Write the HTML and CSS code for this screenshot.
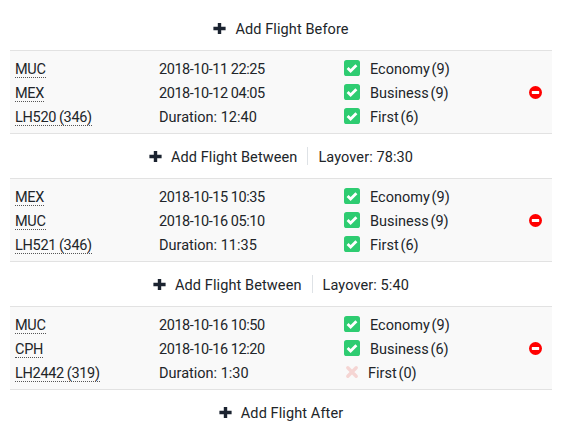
FILE: index.html
```html
<!DOCTYPE html>
<html lang="en">
<head>
<meta charset="utf-8">
<title>Flights</title>
<link rel="stylesheet" href="styles.css">
</head>
<body>
<svg class="defs" width="0" height="0" aria-hidden="true">
  <symbol id="plus" viewBox="0 0 13 13"><path d="M4.800 1h3.400v3.800H12.600v3.400H8.200V12H4.800V8.200H.4V4.800H4.800z"/></symbol>
  <symbol id="check" viewBox="0 0 16 16"><rect width="16" height="16" rx="2.600" fill="#2ecc71"/><path d="M3.600 8l3 3 5.800-5.800" fill="none" stroke="#fff" stroke-width="2.800"/></symbol>
  <symbol id="cross" viewBox="0 0 16 16"><path d="M3.800 3.800l8.400 8.400M12.200 3.800l-8.400 8.400" fill="none" stroke="#f5d5d3" stroke-width="3.400" stroke-linecap="round"/></symbol>
  <symbol id="minus" viewBox="0 0 14 14"><circle cx="7" cy="7" r="7" fill="#f00"/><rect x="3" y="5.500" width="8" height="3" rx=".6" fill="#fff"/></symbol>
</svg>
<main class="list">
  <div class="add first"><svg class="plus"><use href="#plus"/></svg><span class="label">Add Flight Before</span></div>

  <section class="flight">
    <div class="col-code"><span class="code">MUC</span><span class="code">MEX</span><span class="code">LH520 (346)</span></div>
    <div class="col-time"><span class="when">2018-10-11 22:25</span><span class="when">2018-10-12 04:05</span><span class="dur">Duration: 12:40</span></div>
    <div class="col-class">
      <span class="fare"><svg class="ic"><use href="#check"/></svg>Economy (9)</span>
      <span class="fare"><svg class="ic"><use href="#check"/></svg>Business (9)</span>
      <span class="fare"><svg class="ic"><use href="#check"/></svg>First (6)</span>
    </div>
    <svg class="remove"><use href="#minus"/></svg>
  </section>

  <div class="add"><svg class="plus"><use href="#plus"/></svg><span class="label">Add Flight Between</span><span class="label layover">Layover: 78:30</span></div>

  <section class="flight">
    <div class="col-code"><span class="code">MEX</span><span class="code">MUC</span><span class="code">LH521 (346)</span></div>
    <div class="col-time"><span class="when">2018-10-15 10:35</span><span class="when">2018-10-16 05:10</span><span class="dur">Duration: 11:35</span></div>
    <div class="col-class">
      <span class="fare"><svg class="ic"><use href="#check"/></svg>Economy (9)</span>
      <span class="fare"><svg class="ic"><use href="#check"/></svg>Business (9)</span>
      <span class="fare"><svg class="ic"><use href="#check"/></svg>First (6)</span>
    </div>
    <svg class="remove"><use href="#minus"/></svg>
  </section>

  <div class="add"><svg class="plus"><use href="#plus"/></svg><span class="label">Add Flight Between</span><span class="label layover">Layover: 5:40</span></div>

  <section class="flight">
    <div class="col-code"><span class="code">MUC</span><span class="code">CPH</span><span class="code">LH2442 (319)</span></div>
    <div class="col-time"><span class="when">2018-10-16 10:50</span><span class="when">2018-10-16 12:20</span><span class="dur">Duration: 1:30</span></div>
    <div class="col-class">
      <span class="fare"><svg class="ic"><use href="#check"/></svg>Economy (9)</span>
      <span class="fare"><svg class="ic"><use href="#check"/></svg>Business (6)</span>
      <span class="fare none"><svg class="ic"><use href="#cross"/></svg>First (0)</span>
    </div>
    <svg class="remove"><use href="#minus"/></svg>
  </section>

  <div class="add"><svg class="plus"><use href="#plus"/></svg><span class="label">Add Flight After</span></div>
</main>
</body>
</html>
```
FILE: styles.css
```css
html, body { margin: 0; padding: 0; background: #fff; }
body {
  font-family: Roboto, "Liberation Sans", sans-serif;
  font-size: 14.5px;
  line-height: 24px;
  color: #212529;
}
.defs { position: absolute; }
.list { width: 542px; margin-left: 10px; }
.add {
  height: 44px;
  display: flex;
  align-items: center;
  justify-content: center;
}
.add.first { height: 38px; margin-top: 12px; padding-bottom: 6px; box-sizing: border-box; }
.plus { width: 13px; height: 13px; margin-right: 9px; fill: #1b2330; }
.label { height: 18px; line-height: 21px; letter-spacing: .1px; }
.layover {
  margin-left: 10px;
  padding-left: 10px;
  border-left: 1px solid #dee2e6;
}
.flight {
  display: flex;
  align-items: center;
  height: 72px;
  padding: 5px 10px 5px 5px;
  background: #f9f9f9;
  border-top: 1px solid #e2e2e2;
  border-bottom: 1px solid #e2e2e2;
}
.col-code, .col-time, .col-class { display: flex; flex-direction: column; align-items: flex-start; }
.col-code { width: 144px; }
.col-time { width: 185px; }
.col-class { flex: 1; }
.code {
  height: 21px;
  line-height: 27px;
  margin-bottom: 2px;
  border-bottom: 1px dotted #555;
  letter-spacing: -.3px;
  word-spacing: -.5px;
}
.when, .dur { height: 24px; line-height: 27px; }
.when { letter-spacing: -.45px; }
.fare { display: flex; height: 24px; line-height: 27px; word-spacing: -1.8px; }
.ic { width: 16px; height: 16px; margin: 4px 10px 4px 0; }
.none .ic { margin-right: 8px; }
.remove { width: 13px; height: 13px; }
```
